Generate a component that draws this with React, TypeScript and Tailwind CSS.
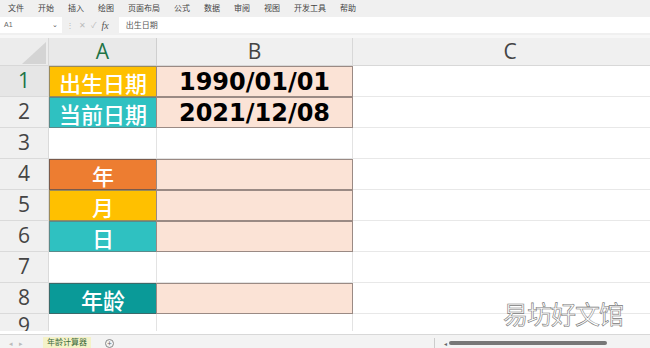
import React from 'react'

const menus = ['文件', '开始', '插入', '绘图', '页面布局', '公式', '数据', '审阅', '视图', '开发工具', '帮助']

type Row = {
  n: string
  a: string
  aCls: string
  b: string
  bFill: boolean
  selected?: boolean
}

const rows: Row[] = [
  { n: '1', a: '出生日期', aCls: 'bg-[#ffc000] border border-[#9a8a5a]', b: '1990/01/01', bFill: true, selected: true },
  { n: '2', a: '当前日期', aCls: 'bg-[#2fc1c1] border border-[#5a8a8a]', b: '2021/12/08', bFill: true },
  { n: '3', a: '', aCls: 'bg-white border-r border-b border-[#e3e3e3]', b: '', bFill: false },
  { n: '4', a: '年', aCls: 'bg-[#ed7d31] border border-[#7a5a4a]', b: '', bFill: true },
  { n: '5', a: '月', aCls: 'bg-[#ffc000] border border-[#9a8a5a]', b: '', bFill: true },
  { n: '6', a: '日', aCls: 'bg-[#2fc1c1] border border-[#5a8a8a]', b: '', bFill: true },
  { n: '7', a: '', aCls: 'bg-white border-r border-b border-[#e3e3e3]', b: '', bFill: false },
  { n: '8', a: '年龄', aCls: 'bg-[#0a9a98] border border-[#3a6a6a]', b: '', bFill: true },
]

const cjk = "font-['Noto_Sans_CJK_SC','Noto_Sans',sans-serif]"

const App = () => {
  return (
    <div className={`w-[650px] h-[348px] overflow-hidden bg-white relative ${cjk}`}>
      {/* menu */}
      <div className="h-[16px] bg-[#f0f0f0] flex items-center text-[8px] text-[#444] leading-none">
        <div className="flex gap-[14px] pl-[8px]">
          {menus.map((m) => (
            <span key={m}>{m}</span>
          ))}
        </div>
      </div>

      {/* formula bar */}
      <div className="h-[19px] bg-[#f0f0f0] flex items-center pb-[1px]">
        <div className="h-[16px] w-[62px] bg-white flex items-center justify-between px-[4px] text-[7px] text-[#666] font-['Liberation_Sans',sans-serif]">
          <span>A1</span>
          <span className="text-[7px] text-[#555]">⌄</span>
        </div>
        <div className="flex items-center gap-[5px] px-[4px] text-[8px] text-[#bbb]">
          <span>⋮</span>
          <span>✕</span>
          <span>✓</span>
          <span className="italic text-[#555] font-['Liberation_Serif',serif] text-[10px]">fx</span>
        </div>
        <div className="flex-1 h-[16px] bg-white ml-[6px] flex items-center pl-[7px] text-[8px] text-[#555]">
          出生日期
        </div>
      </div>

      <div className="h-[3px] bg-[#f7f7f7]" />

      {/* sheet */}
      <div className="grid grid-cols-[49px_108px_196px_314px] grid-rows-[28px_repeat(8,31px)_17px] h-[296px] text-[#444]">
        {/* corner */}
        <div className="bg-[#ececec] border-r border-b border-[#d8d8d8] relative overflow-hidden">
          <svg width="49" height="28" className="absolute left-0 top-0">
            <polygon points="46,4 46,26 22,26" fill="#d4d4d4" />
          </svg>
        </div>
        <div className="bg-[#e9e9e9] border-r border-b border-[#cfcfcf] flex items-center justify-center text-[21px] text-[#217346] font-['Open_Sans',sans-serif]">
          A
        </div>
        <div className="bg-[#f0f0f0] border-r border-b border-[#d8d8d8] flex items-center justify-center text-[21px] font-['Open_Sans',sans-serif] text-[#444]">
          B
        </div>
        <div className="bg-[#f0f0f0] border-b border-[#d8d8d8] flex items-center justify-center text-[21px] font-['Open_Sans',sans-serif] text-[#444]">
          C
        </div>

        {rows.map((r) => (
          <React.Fragment key={r.n}>
            <div
              className={`border-r border-b border-[#dadada] flex items-center justify-center text-[21px] font-['Open_Sans',sans-serif] ${
                r.selected ? 'bg-[#e6e6e6] text-[#217346]' : 'bg-[#f0f0f0] text-[#444]'
              }`}
            >
              {r.n}
            </div>
            <div className={`flex items-center justify-center text-white text-[22px] font-medium leading-none ${r.aCls}`}>
              {r.a}
            </div>
            <div
              className={`flex items-center justify-center text-black font-bold text-[24px] leading-none font-['DejaVu_Sans',sans-serif] ${
                r.bFill ? 'bg-[#fbe3d6] border border-[#9a8a84] -ml-[1px]' : 'bg-white border-r border-b border-[#e3e3e3]'
              }`}
            >
              {r.b}
            </div>
            <div className="bg-white border-b border-[#e8e8e8]" />
          </React.Fragment>
        ))}

        <div className="bg-[#f0f0f0] border-r border-[#dadada] flex items-start justify-center text-[21px] font-['Open_Sans',sans-serif] text-[#444] overflow-hidden leading-none pt-[1px]">
          9
        </div>
        <div className="bg-white border-r border-[#e3e3e3]" />
        <div className="bg-white border-r border-[#e3e3e3]" />
        <div className="bg-white" />
      </div>

      {/* tab bar */}
      <div className="h-[17px] bg-[#f3f3f3] border-t border-[#d8d8d8] flex items-center text-[7px] relative">
        <div className="flex gap-[6px] pl-[9px] text-[#bbb]">
          <span>◂</span>
          <span>▸</span>
        </div>
        <div className="ml-[20px] h-[13px] px-[4px] bg-[#f4f2c8] border-b-2 border-[#7fb27f] flex items-center text-[8px] text-[#3a6a3a]">
          年龄计算器
        </div>
        <div className="ml-[14px] w-[9px] h-[9px] rounded-full border border-[#888] flex items-center justify-center text-[8px] leading-none text-[#666]">
          +
        </div>
        <div className="ml-[320px] h-[10px] w-[1px] bg-[#ccc]" />
        <div className="ml-[9px] text-[6px] text-[#666]">◂</div>
        <div className="ml-[2px] h-[4px] w-[158px] rounded-full bg-[#777]" />
      </div>

      {/* watermark */}
      <div className="absolute left-[503px] top-[301px] text-[25px] leading-none tracking-[-1px] text-white [-webkit-text-stroke:0.6px_#777] font-['Noto_Sans_CJK_SC',sans-serif]">
        易坊好文馆
      </div>
    </div>
  )
}

export default App
